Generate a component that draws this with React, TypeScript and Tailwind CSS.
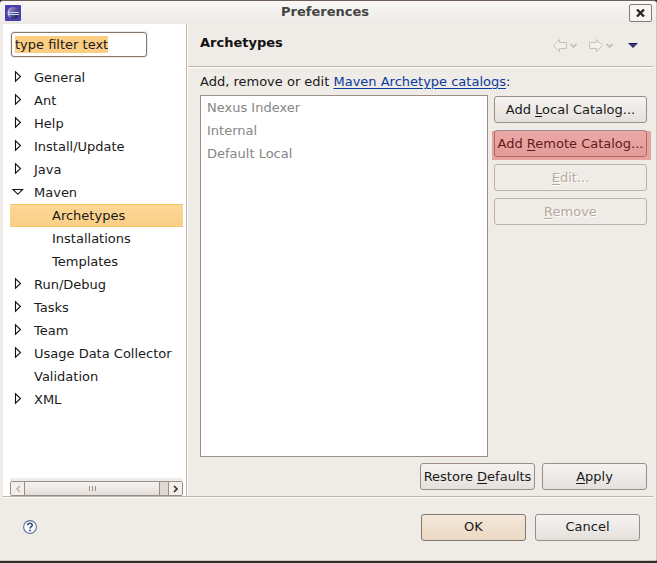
import type { ReactNode } from "react";

type TreeItem = { label: string; state: "closed" | "open" | "leaf"; child?: boolean; selected?: boolean };

const TREE: TreeItem[] = [
  { label: "General", state: "closed" },
  { label: "Ant", state: "closed" },
  { label: "Help", state: "closed" },
  { label: "Install/Update", state: "closed" },
  { label: "Java", state: "closed" },
  { label: "Maven", state: "open" },
  { label: "Archetypes", state: "leaf", child: true, selected: true },
  { label: "Installations", state: "leaf", child: true },
  { label: "Templates", state: "leaf", child: true },
  { label: "Run/Debug", state: "closed" },
  { label: "Tasks", state: "closed" },
  { label: "Team", state: "closed" },
  { label: "Usage Data Collector", state: "closed" },
  { label: "Validation", state: "leaf" },
  { label: "XML", state: "closed" },
];

const CATALOGS = ["Nexus Indexer", "Internal", "Default Local"];

function Expander({ state }: { state: TreeItem["state"] }) {
  if (state === "leaf") return <span className="w-4 shrink-0" />;
  return (
    <svg className="h-[15px] w-4 shrink-0" viewBox="0 0 16 15" fill="#fff" stroke="#111" strokeWidth="1.1" aria-hidden="true">
      {state === "closed" ? <path d="M5.5 1.8V11.2L10.5 6.5Z" /> : <path d="M3 4.5H12.6L7.8 9.3Z" />}
    </svg>
  );
}

function Button({
  children,
  tone = "normal",
  disabled = false,
  className = "",
}: {
  children: ReactNode;
  tone?: "normal" | "primary";
  disabled?: boolean;
  className?: string;
}) {
  const look = disabled
    ? "border-[#bdb2a9] bg-[#efebe6] text-[#b5a99c] [text-shadow:1px_1px_0_#fff]"
    : tone === "primary"
      ? "border-[#84766a] bg-linear-to-b from-[#f4e9dd] via-[#efdfcd] to-[#ebdac5] text-[#1a1a1a]"
      : "border-[#978f87] bg-linear-to-b from-[#f5f3f1] via-[#edeae7] to-[#e5e0dc] text-[#1a1a1a]";
  return (
    <button
      type="button"
      disabled={disabled}
      className={`flex h-[27px] items-center justify-center rounded-[3px] border whitespace-nowrap ${look} ${className}`}
    >
      <span>{children}</span>
    </button>
  );
}

function Key({ children }: { children: string }) {
  return <span className="underline underline-offset-2">{children}</span>;
}

function EclipseLogo() {
  return (
    <svg className="h-4 w-4" viewBox="0 0 16 16" aria-hidden="true">
      <defs>
        <linearGradient id="orb" x1="0" y1="0" x2="1" y2="1">
          <stop offset="0" stopColor="#b9a9d8" />
          <stop offset="0.5" stopColor="#5a5595" />
          <stop offset="1" stopColor="#18183f" />
        </linearGradient>
      </defs>
      <rect width="16" height="16" rx="1" fill="#4a3fae" />
      <circle cx="8.2" cy="8" r="6" fill="url(#orb)" />
      <path d="M5.5 3A6 6 0 0 0 5.5 13A9 9 0 0 1 5.5 3Z" fill="#d8cbe8" />
      <path d="M3 7.5H14M3 9.5H14" stroke="#c4dcf2" strokeWidth="1" />
    </svg>
  );
}

function NavArrow({ flip = false }: { flip?: boolean }) {
  return (
    <span className="flex items-center gap-[3px]">
      <svg
        className={flip ? "h-[13px] w-[14px] -scale-x-100" : "h-[13px] w-[14px]"}
        viewBox="0 0 14 13"
        fill="#f3f0ec"
        stroke="#c6c1bb"
        aria-hidden="true"
      >
        <path d="M0.5 6.5L6.5 0.5V3.5H13.5V9.5H6.5V12.5Z" strokeLinejoin="round" />
      </svg>
      <svg className="h-[5px] w-[7px]" viewBox="0 0 7 5" fill="none" stroke="#c0bab4" strokeWidth="1.6" aria-hidden="true">
        <path d="M0.5 1L3.5 4L6.5 1" />
      </svg>
    </span>
  );
}

function ScrollBar() {
  return (
    <div className="border-t-[3px] border-[#efebe7]">
      <div className="flex h-[15px] rounded-[2px] border border-[#978f87] bg-[#e0d9d3]">
        <button type="button" aria-label="Scroll left" disabled className="flex w-[14px] items-center justify-center border-r border-[#978f87] bg-[#f1eeeb]">
          <svg className="h-2 w-[6px]" viewBox="0 0 6 8" fill="none" stroke="#bdb1a7" strokeWidth="1.5" aria-hidden="true">
            <path d="M5 1L2 4L5 7" />
          </svg>
        </button>
        <div className="flex flex-1 items-center justify-center gap-[2px] border-r border-[#978f87] bg-linear-to-b from-[#f6f4f2] to-[#e5dfdb]">
          <span className="h-[5px] w-px bg-[#978f87]" />
          <span className="h-[5px] w-px bg-[#978f87]" />
          <span className="h-[5px] w-px bg-[#978f87]" />
        </div>
        <div className="w-2" />
        <button type="button" aria-label="Scroll right" className="flex w-[14px] items-center justify-center border-l border-[#978f87] bg-[#f1eeeb]">
          <svg className="h-2 w-[6px]" viewBox="0 0 6 8" fill="none" stroke="#333" strokeWidth="1.7" aria-hidden="true">
            <path d="M1 1L4 4L1 7" />
          </svg>
        </button>
      </div>
    </div>
  );
}

export default function App() {
  return (
    <div className="h-screen bg-black font-['DejaVu_Sans',sans-serif] text-[13px] leading-4 text-[#1a1a1a]">
      <div className="flex h-full flex-col border-b-2 border-[#2e2e2e] bg-[#2e2e2e]">
        <div className="flex min-h-0 flex-1 flex-col rounded-t-[4px] rounded-br-[2px] border-t border-r border-b border-t-[#6e5f57] border-r-[#cfc4ba] border-b-[#cfc4ba] bg-[#efebe7]">
          <header className="flex h-[23px] shrink-0 items-center rounded-t-[3px] bg-linear-to-b from-[#f9f7f5] to-[#edeae5] pr-1 pl-[5px]">
            <EclipseLogo />
            <h1 className="flex-1 pb-px text-center font-bold text-[#444]">Preferences</h1>
            <button type="button" aria-label="Close" className="flex h-[18px] w-[23px] items-center justify-center rounded-[2px] border border-[#857b73] bg-[#f8f6f4]">
              <svg className="h-2 w-[9px]" viewBox="0 0 9 8" stroke="#2b2b2b" strokeWidth="2.4" aria-hidden="true">
                <path d="M1 0.5L8 7.5M8 0.5L1 7.5" />
              </svg>
            </button>
          </header>

          <div className="mx-[3px] flex min-h-0 flex-1">
            <nav className="flex w-[184px] shrink-0 flex-col border-r border-[#c2b5a8] bg-white pr-[3px] pl-[7px]">
              <div className="mt-2 ml-px flex h-[25px] w-[136px] items-center rounded-[3px] border border-[#84766a] bg-white px-[3px] ring-1 ring-[#efebe7]">
                <input
                  type="text"
                  aria-label="Filter"
                  defaultValue="type filter text"
                  className="field-sizing-content h-[17px] bg-[#fbce84] outline-none"
                />
              </div>
              <ul className="mt-[9px] flex-1">
                {TREE.map((item) => (
                  <li
                    key={item.label}
                    className={
                      item.selected
                        ? "flex h-[23px] items-center border-y border-[#f3c66b] bg-linear-to-b from-[#fed797] to-[#facf85]"
                        : "flex h-[23px] items-center"
                    }
                  >
                    <Expander state={item.state} />
                    <span className={item.child ? "pl-[26px] whitespace-nowrap" : "pl-2 whitespace-nowrap"}>{item.label}</span>
                  </li>
                ))}
              </ul>
              <ScrollBar />
            </nav>

            <main className="flex min-w-0 flex-1 flex-col border-l border-white">
              <div className="flex h-[43px] shrink-0 items-center justify-between border-b border-[#c2b5a8] pr-[15px] pl-3 shadow-[0_1px_0_#fff]">
                <h2 className="pb-[5px] font-bold text-[#111]">Archetypes</h2>
                <div className="flex items-center gap-3">
                  <button type="button" aria-label="Back" disabled><NavArrow /></button>
                  <button type="button" aria-label="Forward" disabled><NavArrow flip /></button>
                  <button type="button" aria-label="Menu" className="ml-[3px]">
                    <svg className="h-[5px] w-[10px]" viewBox="0 0 10 5" aria-hidden="true">
                      <path d="M0 0H10L5 5Z" fill="#1a1a5a" />
                      <path d="M2 1H8L5 4Z" fill="#3c3c8c" />
                    </svg>
                  </button>
                </div>
              </div>
              <div className="flex min-h-0 flex-1 flex-col pr-[6px] pb-[6px] pl-3">
                <p className="mt-[7px] mb-[5px] whitespace-nowrap">
                  Add, remove or edit{" "}
                  <a href="#catalogs" className="text-[#0a3a9c] underline underline-offset-2">Maven Archetype catalogs</a>:
                </p>
                <div className="flex min-h-0 flex-1 gap-[6px]">
                  <ul className="flex-1 border border-[#9c8e82] bg-white pl-[6px] text-[#868686]">
                    {CATALOGS.map((name) => (
                      <li key={name} className="flex h-[23px] items-center">{name}</li>
                    ))}
                  </ul>
                  <div className="flex w-[153px] flex-col gap-[7px] pt-px">
                    <Button>Add <Key>L</Key>ocal Catalog...</Button>
                    <div className="relative">
                      <Button className="w-full">Add <Key>R</Key>emote Catalog...</Button>
                      <div className="pointer-events-none absolute -right-1 -bottom-[3px] -left-[2px] top-px bg-[#dc1e1e]/35" />
                    </div>
                    <Button disabled><Key>E</Key>dit...</Button>
                    <Button disabled><Key>R</Key>emove</Button>
                  </div>
                </div>
                <div className="mt-[6px] flex justify-end gap-[7px]">
                  <Button className="w-[115px]">Restore <Key>D</Key>efaults</Button>
                  <Button className="w-[105px]"><Key>A</Key>pply</Button>
                </div>
              </div>
            </main>
          </div>

          <footer className="mx-[3px] flex h-16 shrink-0 items-center justify-between border-t border-[#c2b5a8] pr-[13px] pb-[3px] pl-5 shadow-[inset_0_1px_0_#fff]">
            <button type="button" aria-label="Help">
              <svg className="h-[14px] w-[14px]" viewBox="0 0 14 14" fill="none" aria-hidden="true">
                <circle cx="7" cy="7" r="6.4" fill="#fafcff" stroke="#5d7396" strokeWidth="1.1" />
                <path d="M4.7 5.3C4.7 2.6 9.3 2.6 9.3 5.2C9.3 6.7 7 6.6 7 8.6" stroke="#34517f" strokeWidth="1.6" />
                <path d="M6.1 9.7H7.9V11.3H6.1Z" fill="#34517f" />
              </svg>
            </button>
            <div className="flex gap-[9px]">
              <Button tone="primary" className="w-[105px]">OK</Button>
              <Button className="w-[105px]">Cancel</Button>
            </div>
          </footer>
        </div>
      </div>
    </div>
  );
}
